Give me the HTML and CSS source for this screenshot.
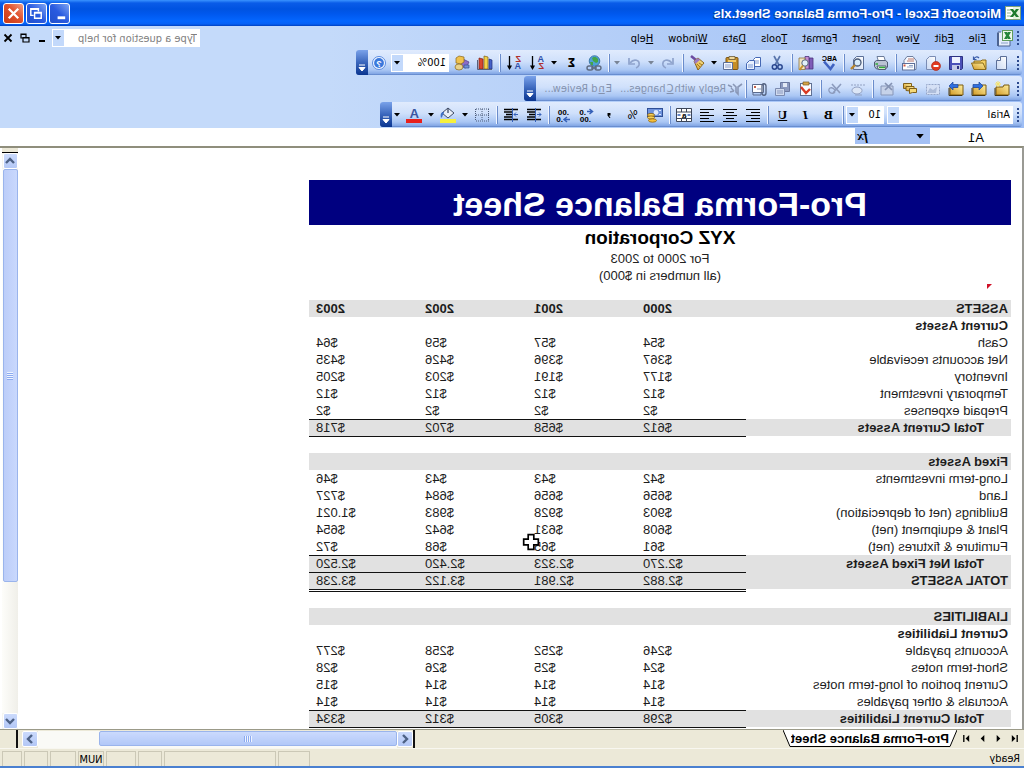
FILE: index.html
```html
<!DOCTYPE html>
<html lang="en">
<head>
<meta charset="utf-8">
<title>Microsoft Excel - Pro-Forma Balance Sheet.xls</title>
<link rel="stylesheet" href="styles.css">
</head>
<body>
<svg class="defs" aria-hidden="true">
  <defs>
    <linearGradient id="gold" x1="0" y1="0" x2="1" y2="1"><stop offset="0" stop-color="#fff0a0"/><stop offset="1" stop-color="#d29a28"/></linearGradient>
    <linearGradient id="page" x1="0" y1="0" x2="1" y2="1"><stop offset="0" stop-color="#fff"/><stop offset="1" stop-color="#c9d8f2"/></linearGradient>
    <symbol id="down" viewBox="0 0 6 4"><path d="M0 0h6L3 3.500z" fill="#000"/></symbol>
    <symbol id="folder" viewBox="0 0 16 16"><path d="M1 4h5l1 2h7v8H1z" fill="url(#gold)" stroke="#7a5a10"/><path d="M2 14.500h13V7" fill="none" stroke="#4a3810"/></symbol>
    <symbol id="chev" viewBox="0 0 10 8"><path d="M1 6l4-4 4 4" fill="none" stroke="#4d6185" stroke-width="2.400"/></symbol>
  </defs>
</svg>
<div class="window">
  <header class="titlebar">
    <svg class="app-icon" viewBox="0 0 16 16"><rect x=".5" y="1.500" width="15" height="13" fill="#e6f3e0" stroke="#7fa27a"/><path d="M8 2h7v12H8z" fill="#fff"/><path d="M10 5h4M10 8h4M10 11h4" stroke="#8fb58a"/><path d="M2 4h3l6 8H8zM8 4h3L5 12H2z" fill="#1f7a2e"/></svg>
    <h1 class="title">Microsoft Excel - Pro-Forma Balance Sheet.xls</h1>
    <div class="caption">
      <button class="cap-btn" aria-label="Minimize"><svg viewBox="0 0 20 20"><path d="M4 13h8v3H4z" fill="#fff"/></svg></button>
      <button class="cap-btn" aria-label="Restore"><svg viewBox="0 0 20 20"><path d="M8 8V5h8v7h-3M8 5.500h8" fill="none" stroke="#fff" stroke-width="1.500"/><path d="M5 9h7v6H5zM5 9.500h7" fill="none" stroke="#fff" stroke-width="1.500"/></svg></button>
      <button class="cap-btn cap-close" aria-label="Close"><svg viewBox="0 0 20 20"><path d="M5 5l10 10M15 5L5 15" stroke="#fff" stroke-width="2.400"/></svg></button>
    </div>
  </header>

  <section class="commands">
    <nav class="menubar">
      <span class="grip"></span>
      <svg class="book" viewBox="0 0 18 18"><path d="M4 6v11h12V3h-3" fill="#e4edfb" stroke="#4c6390"/><path d="M16 4v13" stroke="#4c6390" stroke-width="2"/><rect x="1.500" y="1.500" width="10" height="10" fill="#eef8ea" stroke="#5f9a5c"/><path d="M3 3h3l4 7H7zM7 3h3l-4 7H3z" fill="#26863a"/><path d="M6 14h7" stroke="#8ba0c8"/></svg>
      <button class="menu"><u>F</u>ile</button>
      <button class="menu"><u>E</u>dit</button>
      <button class="menu"><u>V</u>iew</button>
      <button class="menu"><u>I</u>nsert</button>
      <button class="menu">F<u>o</u>rmat</button>
      <button class="menu"><u>T</u>ools</button>
      <button class="menu"><u>D</u>ata</button>
      <button class="menu"><u>W</u>indow</button>
      <button class="menu"><u>H</u>elp</button>
      <div class="combo ask">
        <input class="field" type="text" placeholder="Type a question for help" aria-label="Type a question for help">
        <button class="drop" aria-label="Questions"><svg><use href="#down"/></svg></button>
      </div>
      <div class="doc-controls">
        <button aria-label="Minimize workbook"><svg viewBox="0 0 10 10"><path d="M2 7h6v2H2z"/></svg></button>
        <button aria-label="Restore workbook"><svg viewBox="0 0 10 10"><path d="M4 4V1h5v4H7M4 1.500h5M1 4.500h6V9H1zM1 5h6" fill="none" stroke="#000" stroke-width="1.200"/></svg></button>
        <button aria-label="Close workbook"><svg viewBox="0 0 10 10"><path d="M1.500 1.500l7 7M8.500 1.500l-7 7" stroke="#000" stroke-width="1.800"/></svg></button>
      </div>
    </nav>

    <div class="toolbar">
      <span class="grip"></span>
      <button class="tool" aria-label="New"><svg viewBox="0 0 16 16"><path d="M3.500 1.500h6l4 4v9h-10z" fill="url(#page)" stroke="#5b6f98"/><path d="M9.500 1.500v4h4" fill="#fff" stroke="#5b6f98"/></svg></button>
      <button class="tool" aria-label="Open"><svg viewBox="0 0 16 16"><path d="M1 5h4l1 1h7v8H1z" fill="#f4cf62" stroke="#8a6a1a"/><path d="M4 8h11.500l-2.500 6.500H1z" fill="url(#gold)" stroke="#8a6a1a"/><path d="M8 3c2-2 4-1 5 1M13.500 1.500v3h-3" fill="none" stroke="#3a5ca8" stroke-width="1.200"/></svg></button>
      <button class="tool" aria-label="Save"><svg viewBox="0 0 16 16"><path d="M1.500 1.500h13v13h-12l-1-1z" fill="#4a50b8" stroke="#2d3282"/><path d="M4 2h8v6H4z" fill="#eef2ff"/><path d="M4 10h8v5H4z" fill="#c3c9e6"/><path d="M5 11h2v3H5z" fill="#2d3282"/></svg></button>
      <button class="tool" aria-label="Permission"><svg viewBox="0 0 16 16"><path d="M5.500 1.500h6l3 3v10h-9z" fill="url(#page)" stroke="#7a8cb4"/><circle cx="5" cy="11" r="4.500" fill="#e03a20" stroke="#a42010" stroke-width=".6"/><path d="M2.500 10h5v2h-5z" fill="#fff"/></svg></button>
      <button class="tool" aria-label="E-mail"><svg viewBox="0 0 16 16"><path d="M1.500 6L5 1.500h6l3 4v9h-12z" fill="#f4f7ff" stroke="#70809f"/><path d="M4 4h6M4 6h7" stroke="#c07b6a"/><rect x="3.500" y="8.500" width="12" height="6.500" fill="#fff" stroke="#5c6f99"/><path d="M5 12h6M5 10.500h4" stroke="#92a4c8"/><path d="M12.500 9.500h2v2h-2z" fill="#d45a45"/></svg></button>
      <span class="sep"></span>
      <button class="tool" aria-label="Print"><svg viewBox="0 0 16 16"><path d="M5 1.500h7l-1.500 5h-7z" fill="#fff" stroke="#6b7b99"/><path d="M1.500 7l2-1.500h9l2 1.500v4.500l-2 2.500h-9l-2-2z" fill="#b9c2d2" stroke="#4f5c75"/><path d="M3 11h9l-1.500 3.500h-7z" fill="#f7fbe8" stroke="#4f5c75"/><path d="M4 12.500h6M11 9h2.500" stroke="#2fae3a" stroke-width="1.600"/></svg></button>
      <button class="tool" aria-label="Print Preview"><svg viewBox="0 0 16 16"><path d="M2.500 1.500h7l3 3v10h-10z" fill="url(#page)" stroke="#5b6f98"/><circle cx="8.500" cy="7.500" r="3.500" fill="#d8ecfa" stroke="#4b5b78" stroke-width="1.300"/><path d="M11 10l4 4" stroke="#b8862c" stroke-width="2.400"/></svg></button>
      <span class="sep"></span>
      <button class="tool" aria-label="Spelling"><svg viewBox="0 0 16 16"><text x="0" y="6" class="glyph-abc">ABC</text><path d="M3 9l3.500 5L13 6.500" fill="none" stroke="#3f62c0" stroke-width="2.600"/></svg></button>
      <button class="tool" aria-label="Research"><svg viewBox="0 0 16 16"><path d="M1 3h4v11H1z" fill="#7e5bb8" stroke="#4b347c" stroke-width=".8"/><path d="M5 1.500h4v12.500H5z" fill="#c58cd0" stroke="#4b347c" stroke-width=".8"/><path d="M9 3h6v11.500H9z" fill="#f1e5c0" stroke="#8d7440" stroke-width=".8"/><circle cx="9" cy="8" r="3.200" fill="#e1eff9" stroke="#56657e"/><path d="M11 10.500L14.500 15" stroke="#c8912a" stroke-width="2"/></svg></button>
      <span class="sep"></span>
      <button class="tool" aria-label="Cut"><svg viewBox="0 0 16 16"><path d="M5 1l5 9M11 1L6 10" stroke="#5a76ac" stroke-width="1.700"/><circle cx="5" cy="12" r="2.200" fill="none" stroke="#29468e" stroke-width="1.500"/><circle cx="10.500" cy="12" r="2.200" fill="none" stroke="#29468e" stroke-width="1.500"/></svg></button>
      <button class="tool" aria-label="Copy"><svg viewBox="0 0 16 16"><path d="M1.500 2.500h5l2 2v7h-7z" fill="#fff" stroke="#4568b4"/><path d="M3 6h4M3 8h4" stroke="#7f9bd4"/><path d="M7.500 5.500h5l3 3v6h-8z" fill="#e9f1ff" stroke="#4568b4"/><path d="M9 10h5M9 12h5" stroke="#7f9bd4"/></svg></button>
      <button class="tool" aria-label="Paste"><svg viewBox="0 0 16 16"><rect x="1" y="2.500" width="12" height="12" rx="1" fill="#c68e26" stroke="#7b5513"/><path d="M4 1.500h6v3H4z" fill="#f1d99a" stroke="#6a5a3a" stroke-width=".8"/><path d="M3 5h8v2H3z" fill="#f5cc66"/><path d="M6.500 7.500h9v7h-9z" fill="#f6f8ff" stroke="#5c6f99"/><path d="M8 10h6M8 12h6" stroke="#8a9cc4"/></svg></button>
      <button class="arrow" aria-label="Paste options"><svg><use href="#down"/></svg></button>
      <button class="tool" aria-label="Format Painter"><svg viewBox="0 0 16 16"><path d="M14 1l-5 4" stroke="#6c4aa0" stroke-width="2.600"/><path d="M11 6L7 3 1 8l6 7z" fill="url(#gold)" stroke="#8b6418"/><path d="M11 6L7 3 5 5l5 4z" fill="#9a78c4"/><path d="M8 9l-3 3M6 8l-3 2" stroke="#a87b20"/></svg></button>
      <span class="sep"></span>
      <button class="tool" aria-label="Undo"><svg viewBox="0 0 16 16"><path d="M4 8c4-5 10-3 9 2-.4 1.500-1.500 2.500-3 3" fill="none" stroke="#8fa3cc" stroke-width="1.700"/><path d="M3 3v6h6" fill="none" stroke="#8fa3cc" stroke-width="1.700"/></svg></button>
      <button class="arrow faded" aria-label="Undo list"><svg><use href="#down"/></svg></button>
      <button class="tool" aria-label="Redo"><svg viewBox="0 0 16 16"><path d="M12 8C8 3 2 5 3 10c.4 1.500 1.500 2.500 3 3" fill="none" stroke="#8fa3cc" stroke-width="1.700"/><path d="M13 3v6H7" fill="none" stroke="#8fa3cc" stroke-width="1.700"/></svg></button>
      <button class="arrow faded" aria-label="Redo list"><svg><use href="#down"/></svg></button>
      <span class="sep"></span>
      <button class="tool" aria-label="Insert Hyperlink"><svg viewBox="0 0 16 16"><circle cx="7.500" cy="6" r="5.300" fill="#4fa0d8" stroke="#2e6c9c" stroke-width=".8"/><path d="M4 4c2-3 5-2 6-1l-1 3-3 2-2-1zM9 7l3 0-1 3-2 0z" fill="#43a648"/><rect x="1" y="11" width="6" height="4" rx="2" fill="none" stroke="#5d6a80" stroke-width="1.400"/><rect x="9" y="11" width="6" height="4" rx="2" fill="none" stroke="#5d6a80" stroke-width="1.400"/><path d="M5 13h6" stroke="#5d6a80" stroke-width="1.500"/></svg></button>
      <button class="tool sigma" aria-label="AutoSum">Σ</button>
      <button class="arrow" aria-label="AutoSum options"><svg><use href="#down"/></svg></button>
      <button class="tool" aria-label="Sort Ascending"><svg viewBox="0 0 16 16"><text x="1" y="7" class="glyph-sort blue">A</text><text x="1" y="14" class="glyph-sort red">Z</text><path d="M12.500 1v12" stroke="#000" stroke-width="1.300"/><path d="M10 10.500h5L12.500 15z"/></svg></button>
      <button class="tool" aria-label="Sort Descending"><svg viewBox="0 0 16 16"><text x="1" y="7" class="glyph-sort red">Z</text><text x="1" y="14" class="glyph-sort blue">A</text><path d="M12.500 1v12" stroke="#000" stroke-width="1.300"/><path d="M10 10.500h5L12.500 15z"/></svg></button>
      <span class="sep"></span>
      <button class="tool" aria-label="Chart Wizard"><svg viewBox="0 0 16 16"><path d="M1 5l3-1v10H1z" fill="#4460c8" stroke="#1f2f7a" stroke-width=".7"/><path d="M5 2l4-1v13H5z" fill="#f2d24a" stroke="#7b5b12" stroke-width=".7"/><path d="M10 4l4-1v11h-4z" fill="#d8452e" stroke="#7a1e12" stroke-width=".7"/><path d="M1 14.500h14.500V5" fill="none" stroke="#56617c"/></svg></button>
      <button class="tool" aria-label="Drawing"><svg viewBox="0 0 16 16"><path d="M1 7l6-3 3 7-6 2z" fill="#8a6cc8" stroke="#4d3a86" stroke-width=".7"/><path d="M6 2l5-1 3 2v5l-5 1-3-2z" fill="#f0c24e" stroke="#8a6518" stroke-width=".7"/><ellipse cx="11" cy="12" rx="4" ry="3" fill="#e8d28c" stroke="#8a6518" stroke-width=".7"/><path d="M1 10h5v3H1z" fill="#6f8fd8" stroke="#33508f" stroke-width=".7"/></svg></button>
      <div class="combo zoom">
        <input class="field" type="text" value="100%" aria-label="Zoom">
        <button class="drop" aria-label="Zoom levels"><svg><use href="#down"/></svg></button>
      </div>
      <button class="tool" aria-label="Help"><svg viewBox="0 0 16 16"><circle cx="8" cy="8" r="6.500" fill="#f5f9ff" stroke="#5a8ae0"/><circle cx="8" cy="8" r="4.900" fill="#3b78dc"/><text x="5.200" y="11.500" class="glyph-help">?</text></svg></button>
      <button class="more" aria-label="Toolbar options"><svg viewBox="0 0 8 8"><path d="M1 1h6M1 3.500h6L4 7z" fill="#fff" stroke="#fff" stroke-width="1"/></svg></button>
    </div>

    <div class="toolbar">
      <span class="grip"></span>
      <button class="tool" aria-label="New Comment"><svg viewBox="0 0 16 16"><use href="#folder"/><path d="M12 0v6M9 3h6M10 1l4 4M14 1l-4 4" stroke="#f6e36a"/></svg></button>
      <button class="tool" aria-label="Previous Comment"><svg viewBox="0 0 16 16"><use href="#folder"/><path d="M4 5l4-4v2.500h6v3H8V9z" fill="#2f6fe0" stroke="#1c4596" stroke-width=".7"/></svg></button>
      <button class="tool" aria-label="Next Comment"><svg viewBox="0 0 16 16"><use href="#folder"/><path d="M15 5l-4-4v2.500H6v3h5V9z" fill="#2f6fe0" stroke="#1c4596" stroke-width=".7"/></svg></button>
      <button class="tool" aria-label="Show Comment"><svg viewBox="0 0 16 16"><rect x="1.500" y="3.500" width="13" height="10" fill="#d5e0f5" stroke="#96a6c8" stroke-dasharray="2 1"/><path d="M4 6l4 3 3-2 3 5H5z" fill="#aebdda"/></svg></button>
      <button class="tool" aria-label="Show All Comments"><svg viewBox="0 0 16 16"><path d="M6.500 2.500h8v5h-8z" fill="url(#gold)" stroke="#80601a"/><path d="M4 5.500h8v4l-8 1z" fill="url(#gold)" stroke="#80601a"/><path d="M1.500 7.500h7v5l-3-1h-4z" fill="#f6d978" stroke="#80601a"/></svg></button>
      <button class="tool" aria-label="Delete Comment"><svg viewBox="0 0 16 16"><path d="M2 5h12v9H2z" fill="#c6d2e9" stroke="#8796b8"/><path d="M3 2l7 7M10 2L3 9" stroke="#8492b2" stroke-width="1.700"/></svg></button>
      <span class="sep"></span>
      <button class="tool" aria-label="Create Ink"><svg viewBox="0 0 16 16"><path d="M1 4h14" stroke="#92a1c2" stroke-dasharray="2 1"/><ellipse cx="9" cy="9.500" rx="5" ry="3.500" fill="#dce6f6" stroke="#92a1c2"/><path d="M4 14h7" stroke="#92a1c2"/></svg></button>
      <button class="tool" aria-label="Delete Ink"><svg viewBox="0 0 16 16"><path d="M2 3l8 9M11 3l-8 9" stroke="#8c9bbd" stroke-width="1.600"/><path d="M8 9c3-4 7-2 6 1s-5 3-6 1" fill="none" stroke="#8c9bbd" stroke-width="1.300"/></svg></button>
      <span class="sep"></span>
      <button class="tool" aria-label="Create Task"><svg viewBox="0 0 16 16"><rect x="2.500" y="2.500" width="11" height="12" fill="#fbfcff" stroke="#5f6f92"/><path d="M5 1h6v3H5z" fill="#d8a648" stroke="#76581f" stroke-width=".7"/><path d="M4 8l4 4 5-6" fill="none" stroke="#d83a24" stroke-width="2.400"/></svg></button>
      <button class="tool" aria-label="Update File"><svg viewBox="0 0 16 16"><path d="M1.500 1.500h9v9h-9z" fill="#8c9ac0" stroke="#6a78a0"/><path d="M4 2h4v4H4z" fill="#e4eaf6"/><path d="M6.500 7.500h9v7h-9z" fill="#d0daee" stroke="#7c8bb0"/><path d="M8 10h6M8 12h6" stroke="#8c9ac0"/></svg></button>
      <button class="tool" aria-label="Send to Mail Recipient"><svg viewBox="0 0 16 16"><path d="M4.500 3.500h11v8h-11z" fill="#fff" stroke="#5c6b8c"/><path d="M7 8h4" stroke="#8a9cc4"/><path d="M12 5h2v2h-2z" fill="#c4624d"/><path d="M2 5v7c0 3 4 3 4 0V5c0-3-4-3-4 0" fill="none" stroke="#53617f" stroke-width="1.300"/><path d="M7 12v2h8v-2" fill="none" stroke="#5c6b8c"/></svg></button>
      <span class="sep"></span>
      <button class="text-tool"><svg viewBox="0 0 16 16"><path d="M1 3l4 3v7l2-2V6l3-3" fill="none" stroke="#8997b6" stroke-width="1.600"/><path d="M9 10l3-3M9 10l4 1M11 6l4-2" stroke="#8997b6" stroke-width="1.400"/></svg>Reply with <u>C</u>hanges...</button>
      <button class="text-tool">E<u>n</u>d Review...</button>
      <button class="more" aria-label="Toolbar options"><svg viewBox="0 0 8 8"><path d="M1 1h6M1 3.500h6L4 7z" fill="#fff" stroke="#fff" stroke-width="1"/></svg></button>
    </div>

    <div class="toolbar">
      <span class="grip"></span>
      <div class="combo font-name">
        <input class="field" type="text" value="Arial" aria-label="Font">
        <button class="drop" aria-label="Fonts"><svg><use href="#down"/></svg></button>
      </div>
      <div class="combo font-size">
        <input class="field" type="text" value="10" aria-label="Font size">
        <button class="drop" aria-label="Font sizes"><svg><use href="#down"/></svg></button>
      </div>
      <span class="sep"></span>
      <button class="tool serif" aria-label="Bold">B</button>
      <button class="tool serif" aria-label="Italic"><i>I</i></button>
      <button class="tool serif" aria-label="Underline"><u>U</u></button>
      <span class="sep"></span>
      <button class="tool" aria-label="Align Left"><svg viewBox="0 0 16 16"><path d="M1 2.500h14M1 5.500h9M1 8.500h14M1 11.500h9M1 14.500h14" stroke="#000"/></svg></button>
      <button class="tool" aria-label="Center"><svg viewBox="0 0 16 16"><path d="M1 2.500h14M4 5.500h8M1 8.500h14M4 11.500h8M1 14.500h14" stroke="#000"/></svg></button>
      <button class="tool" aria-label="Align Right"><svg viewBox="0 0 16 16"><path d="M1 2.500h14M6 5.500h9M1 8.500h14M6 11.500h9M1 14.500h14" stroke="#000"/></svg></button>
      <button class="tool" aria-label="Merge and Center"><svg viewBox="0 0 16 16"><path d="M.5 1.500h15v13H.5zM.5 5h15M.5 11.500h15M5.500 1.500V5M10.500 1.500V5M5.500 11.500v3M10.500 11.500v3" fill="#fff" stroke="#3d4658"/><text x="5.500" y="10.800" class="glyph-tiny">a</text><path d="M1.500 8h3M11.500 8h3" stroke="#3560b8" stroke-width="1.500"/></svg></button>
      <span class="sep"></span>
      <button class="tool" aria-label="Currency Style"><svg viewBox="0 0 16 16"><rect x=".5" y="1.500" width="15" height="8" fill="#6f93dc" stroke="#2f4f96"/><circle cx="7" cy="5.500" r="2.400" fill="#dce8ff"/><path d="M2 3.500h2M2 7.500h2" stroke="#dce8ff"/><ellipse cx="12" cy="8" rx="3.500" ry="1.600" fill="#f7d25a" stroke="#8b5f0e" stroke-width=".8"/><ellipse cx="12" cy="10.500" rx="3.500" ry="1.600" fill="#f7d25a" stroke="#8b5f0e" stroke-width=".8"/><ellipse cx="10.500" cy="13.500" rx="4" ry="1.700" fill="#f7c03a" stroke="#8b5f0e" stroke-width=".8"/></svg></button>
      <button class="tool plain" aria-label="Percent Style">%</button>
      <button class="tool" aria-label="Comma Style"><svg viewBox="0 0 16 16"><path d="M6.500 6h3v2.500L7.500 11h-1L8 8.500H6.500z"/></svg></button>
      <button class="tool" aria-label="Increase Decimal"><svg viewBox="0 0 16 16"><text x="8" y="7.500" class="glyph-dec">.0</text><text x="3" y="15" class="glyph-dec">.00</text><path d="M7 4.500H2M4.500 2L1.500 4.500 4.500 7" fill="none" stroke="#3560b8" stroke-width="1.500"/></svg></button>
      <button class="tool" aria-label="Decrease Decimal"><svg viewBox="0 0 16 16"><text x="2" y="7.500" class="glyph-dec">.00</text><text x="8" y="15" class="glyph-dec">.0</text><path d="M1 12.500h5M4 10l3 2.500L4 15" fill="none" stroke="#3560b8" stroke-width="1.500"/></svg></button>
      <span class="sep"></span>
      <button class="tool" aria-label="Decrease Indent"><svg viewBox="0 0 16 16"><path d="M1 2.500h14M7 5h8M7 7.500h6M7 10h8M1 12.500h14" stroke="#000" stroke-width="1.300"/><path d="M5 7.500H1M3 5.500l-2 2 2 2M6.500 1v14" fill="none" stroke="#3560b8"/></svg></button>
      <button class="tool" aria-label="Increase Indent"><svg viewBox="0 0 16 16"><path d="M1 2.500h14M7 5h8M7 7.500h6M7 10h8M1 12.500h14" stroke="#000" stroke-width="1.300"/><path d="M1 7.500h4M3 5.500l2 2-2 2M6.500 1v14" fill="none" stroke="#3560b8"/></svg></button>
      <span class="sep"></span>
      <button class="tool" aria-label="Borders"><svg viewBox="0 0 16 16"><path d="M1.500 2v12M8 2v12M14.500 2v12M1 2h14M1 8h14M1 14h14" stroke="#4b5a78" stroke-dasharray="1 1"/></svg></button>
      <button class="arrow" aria-label="Border options"><svg><use href="#down"/></svg></button>
      <button class="tool wide" aria-label="Fill Color"><svg viewBox="0 0 18 16"><path d="M3 6l6-5 6 5-6 5z" fill="#e8eef8" stroke="#3f4c66"/><path d="M9 1V6" stroke="#3f4c66" stroke-width="1.300"/><path d="M13 5c3 0 4 2 3 6-2-1-1-3-3-5z" fill="#3f70c4"/><path d="M1 12h16v4H1z" fill="#f6f03c"/></svg></button>
      <button class="arrow" aria-label="Fill colors"><svg><use href="#down"/></svg></button>
      <button class="tool wide" aria-label="Font Color"><svg viewBox="0 0 18 16"><text x="4" y="11" class="glyph-font">A</text><path d="M1 12h16v4H1z" fill="#e8201c"/></svg></button>
      <button class="arrow" aria-label="Font colors"><svg><use href="#down"/></svg></button>
      <button class="more" aria-label="Toolbar options"><svg viewBox="0 0 8 8"><path d="M1 1h6M1 3.500h6L4 7z" fill="#fff" stroke="#fff" stroke-width="1"/></svg></button>
    </div>
  </section>

  <div class="formula">
    <input class="name-box" type="text" value="A1" aria-label="Name box">
    <div class="formula-tools">
      <button aria-label="Names"><svg class="name-arrow"><use href="#down"/></svg></button>
      <button class="fx" aria-label="Insert Function">fx</button>
    </div>
    <input class="formula-input" type="text" aria-label="Formula">
  </div>

  <main class="workspace">
    <div class="sheet">
      <h2 class="banner">Pro-Forma Balance Sheet</h2>
      <p class="company">XYZ Corporation</p>
      <p class="note">For 2000 to 2003</p>
      <p class="note">(all numbers in $000)</p>
      <div class="gap"><span class="comment-mark"></span></div>
      <table class="grid">
        <colgroup><col class="c-label"><col class="c-first"><col class="c-num"><col class="c-num"><col class="c-num"></colgroup>
        <tbody>
          <tr class="shade head"><th>ASSETS</th><td>2000</td><td>2001</td><td>2002</td><td>2003</td></tr>
          <tr><th class="strong">Current Assets</th><td></td><td></td><td></td><td></td></tr>
          <tr><th>Cash</th><td>$54</td><td>$57</td><td>$59</td><td>$64</td></tr>
          <tr><th>Net accounts receivable</th><td>$367</td><td>$396</td><td>$426</td><td>$435</td></tr>
          <tr><th>Inventory</th><td>$177</td><td>$191</td><td>$203</td><td>$205</td></tr>
          <tr><th>Temporary investment</th><td>$12</td><td>$12</td><td>$12</td><td>$12</td></tr>
          <tr><th>Prepaid expenses</th><td>$2</td><td>$2</td><td>$2</td><td>$2</td></tr>
          <tr class="shade ruled"><th class="strong indent">Total Current Assets</th><td>$612</td><td>$658</td><td>$702</td><td>$718</td></tr>
          <tr class="after"><th></th><td></td><td></td><td></td><td></td></tr>
          <tr class="shade"><th class="strong">Fixed Assets</th><td></td><td></td><td></td><td></td></tr>
          <tr><th>Long-term investments</th><td>$42</td><td>$43</td><td>$43</td><td>$46</td></tr>
          <tr><th>Land</th><td>$656</td><td>$656</td><td>$684</td><td>$727</td></tr>
          <tr><th>Buildings (net of depreciation)</th><td>$903</td><td>$928</td><td>$983</td><td>$1.021</td></tr>
          <tr><th>Plant &amp; equipment (net)</th><td>$608</td><td>$631</td><td>$642</td><td>$654</td></tr>
          <tr><th>Furniture &amp; fixtures (net)</th><td>$61</td><td class="pointed">$65<svg class="cursor" viewBox="0 0 16 16"><path d="M5.500 1.500h5v4h4v5h-4v4h-5v-4h-4v-5h4z" fill="#fff" stroke="#000" stroke-width="1.500"/></svg></td><td>$68</td><td>$72</td></tr>
          <tr class="shade ruled"><th class="strong indent">Total Net Fixed Assets</th><td>$2.270</td><td>$2.323</td><td>$2.420</td><td>$2.520</td></tr>
          <tr class="shade ruled"><th class="strong">TOTAL ASSETS</th><td>$2.882</td><td>$2.981</td><td>$3.122</td><td>$3.238</td></tr>
          <tr class="after double"><th></th><td></td><td></td><td></td><td></td></tr>
          <tr class="shade"><th class="strong">LIABILITIES</th><td></td><td></td><td></td><td></td></tr>
          <tr><th class="strong">Current Liabilities</th><td></td><td></td><td></td><td></td></tr>
          <tr><th>Accounts payable</th><td>$246</td><td>$252</td><td>$258</td><td>$277</td></tr>
          <tr><th>Short-term notes</th><td>$24</td><td>$25</td><td>$26</td><td>$28</td></tr>
          <tr><th>Current portion of long-term notes</th><td>$14</td><td>$14</td><td>$14</td><td>$15</td></tr>
          <tr><th>Accruals &amp; other payables</th><td>$14</td><td>$14</td><td>$14</td><td>$14</td></tr>
          <tr class="shade ruled"><th class="strong indent">Total Current Liabilities</th><td>$298</td><td>$305</td><td>$312</td><td>$334</td></tr>
          <tr class="after"><th></th><td></td><td></td><td></td><td></td></tr>
        </tbody>
      </table>
    </div>
    <div class="vscroll">
      <div class="split-handle"></div>
      <button class="sb" aria-label="Scroll up"><svg><use href="#chev"/></svg></button>
      <div class="vtrack"><div class="vthumb"><span></span></div></div>
      <button class="sb flip" aria-label="Scroll down"><svg><use href="#chev"/></svg></button>
    </div>
  </main>

  <div class="bottom">
    <div class="tabs">
      <button class="nav" aria-label="First sheet"><svg viewBox="0 0 10 10"><path d="M2 1v8" stroke="#000" stroke-width="1.500"/><path d="M8 1v8L4 5z"/></svg></button>
      <button class="nav" aria-label="Previous sheet"><svg viewBox="0 0 10 10"><path d="M7 1v8L3 5z"/></svg></button>
      <button class="nav" aria-label="Next sheet"><svg viewBox="0 0 10 10"><path d="M3 1v8l4-4z"/></svg></button>
      <button class="nav" aria-label="Last sheet"><svg viewBox="0 0 10 10"><path d="M8 1v8" stroke="#000" stroke-width="1.500"/><path d="M2 1v8l4-4z"/></svg></button>
      <button class="tab"><svg class="edge" viewBox="0 0 8 17" preserveAspectRatio="none"><path d="M0 0l7 17h1V0z" fill="#fff"/><path d="M0 0l7 16.500h1" fill="none" stroke="#000"/></svg><span>Pro-Forma Balance Sheet</span><svg class="edge" viewBox="0 0 8 17" preserveAspectRatio="none"><path d="M8 0L1 17H0V0z" fill="#fff"/><path d="M8 0L1 16.500H0" fill="none" stroke="#000"/></svg></button>
    </div>
    <div class="hscroll">
      <button class="sb left" aria-label="Scroll left"><svg><use href="#chev"/></svg></button>
      <div class="htrack"><div class="hthumb"><span></span></div></div>
      <button class="sb right" aria-label="Scroll right"><svg><use href="#chev"/></svg></button>
    </div>
    <div class="corner"></div>
  </div>

  <footer class="status">
    <span class="ready">Ready</span>
    <span class="cell w34"></span>
    <span class="cell w112"></span>
    <span class="cell w25"></span>
    <span class="cell w30"></span>
    <span class="cell w28">NUM</span>
    <span class="cell w28"></span>
    <span class="cell w25"></span>
    <span class="cell w20"></span>
  </footer>
</div>
</body>
</html>
```
FILE: styles.css
```css
* { box-sizing: border-box; }

body {
  margin: 0;
  overflow: hidden;
  font-family: "DejaVu Sans Condensed", "DejaVu Sans", sans-serif;
  font-size: 11px;
  color: #000;
}

button, input {
  font: inherit;
  color: inherit;
  margin: 0;
  padding: 0;
  border: 0;
  border-radius: 0;
  background: none;
}

button { display: flex; align-items: center; justify-content: center; }
h1, h2, p { margin: 0; }
.defs { position: absolute; width: 0; height: 0; }

/* the whole window is shown as in a mirror */
.window {
  display: flex;
  flex-direction: column;
  height: 100vh;
  transform: scaleX(-1);
  background: #ece9d8;
  border-bottom: 2px solid #4a80d0;
}

/* title bar */
.titlebar {
  display: flex;
  align-items: center;
  gap: 4px;
  height: 26px;
  flex: none;
  padding: 0 3px;
  background: linear-gradient(#3a93ff 0, #0a5ce8 3px, #0053e1 9px, #0058ee 14px, #0466ff 21px, #0560f5 24px, #0040c0 26px);
}
.app-icon { width: 16px; height: 16px; }
.title {
  flex: 1;
  font-family: "Liberation Sans", sans-serif;
  font-size: 13px;
  font-weight: bold;
  color: #fff;
  text-shadow: 1px 1px #0a3a9a;
}
.caption { display: flex; gap: 2px; }
.cap-btn {
  width: 21px;
  height: 21px;
  border: 1px solid #fff;
  border-radius: 3px;
  background: linear-gradient(135deg, #7ea4f2, #2a5be0 50%, #2250cc);
}
.cap-btn svg { width: 19px; height: 19px; }
.cap-close { background: linear-gradient(135deg, #f0a088, #e0502c 45%, #c83a14); }

/* menus and toolbars */
.commands {
  flex: none;
  padding: 0 2px;
  background: linear-gradient(90deg, #9ebef5, #c4dafa 68%);
}
.menubar { display: flex; align-items: center; height: 24px; }
.grip {
  flex: none;
  width: 2px;
  height: 14px;
  margin: 0 3px;
  background: repeating-linear-gradient(#2c4a8e 0, #2c4a8e 2px, transparent 2px, transparent 4px);
}
.book { width: 18px; height: 18px; margin-right: 2px; }
.menu { padding: 0 7px 0 8px; }
.combo {
  display: flex;
  height: 18px;
  background: #fff;
}
.field { flex: 1; min-width: 0; padding: 0 3px; }
.field::placeholder { color: #808080; opacity: 1; }
.drop {
  width: 11px;
  margin: 1px;
  background: #c3d9fb;
}
.drop svg, .arrow svg { width: 6px; height: 4px; }
.ask { width: 148px; margin-left: auto; }
.doc-controls { display: flex; gap: 5px; margin-left: 4px; }
.doc-controls button { width: 12px; height: 14px; }
.doc-controls svg { width: 10px; height: 10px; }

.toolbar {
  display: flex;
  align-items: center;
  width: max-content;
  height: 25px;
  margin-bottom: 1px;
  border-radius: 3px;
  overflow: hidden;
  background: linear-gradient(#e0ebfd, #cfe0fb 45%, #a9c6f4 80%, #86a9e6 94%, #5a80c4);
}
.tool { flex: none; width: 23px; height: 22px; }
.tool svg { width: 16px; height: 16px; overflow: visible; }
.arrow { flex: none; width: 11px; height: 22px; }
.faded { opacity: 0.4; }
.sep {
  flex: none;
  width: 6px;
  height: 18px;
  background: linear-gradient(90deg, transparent 2px, #6a8ccb 2px, #6a8ccb 3px, #f1f6ff 3px, #f1f6ff 4px, transparent 4px);
}
.zoom { width: 58px; margin-left: 2px; }
.font-name { width: 126px; margin-left: 1px; }
.font-size { width: 38px; margin-left: 3px; }
.wide svg { width: 18px; height: 16px; }
.more {
  width: 12px;
  height: 25px;
  align-items: flex-end;
  padding-bottom: 3px;
  background: linear-gradient(#7aa2ea, #3a66bc 50%, #0a3590);
}
.more svg { width: 8px; height: 8px; }
.text-tool { gap: 1px; padding-right: 8px; color: #8492ae; white-space: nowrap; }
.text-tool svg { width: 16px; height: 16px; }
.serif { font-family: "Liberation Serif", serif; font-size: 13px; font-weight: bold; }
.plain { font-size: 12px; }
.sigma { font-size: 13px; font-weight: bold; }
.glyph-abc { font: bold 7px "Liberation Sans", sans-serif; }
.glyph-sort { font: bold 9px "Liberation Sans", sans-serif; }
.glyph-dec { font: bold 8px "Liberation Sans", sans-serif; }
.glyph-tiny { font: bold 8px "Liberation Sans", sans-serif; }
.glyph-help { font: bold 9px "Liberation Sans", sans-serif; fill: #fff; }
.glyph-font { font: bold 13px "Liberation Sans", sans-serif; fill: #3a55a0; }
.blue { fill: #2f4fa8; }
.red { fill: #b0302c; }

/* formula bar */
.formula {
  display: flex;
  flex: none;
  height: 18px;
  background: #fff;
}
.name-box {
  width: 94px;
  padding-left: 2px;
  text-align: center;
  font-family: "Liberation Sans", sans-serif;
  font-size: 13px;
}
.formula-tools {
  display: flex;
  justify-content: space-between;
  width: 75px;
  height: 16px;
  padding: 0 2px 0 6px;
  background: #a3c0f4;
}
.name-arrow { width: 8px; height: 5px; }
.fx { font-family: "Liberation Serif", serif; font-size: 13px; font-weight: bold; font-style: italic; }
.formula-input { flex: 1; }

/* sheet */
.workspace {
  display: flex;
  flex: 1;
  min-height: 0;
  border-top: 2px solid #8f8e7c;
  border-left: 2px solid #9a9a94;
  background: #fff;
}
.sheet {
  flex: 1;
  overflow: hidden;
  padding: 32px 0 0 11px;
  font-family: "Liberation Sans", sans-serif;
  font-size: 13px;
}
.banner {
  width: 702px;
  height: 45px;
  line-height: 48px;
  font-size: 34px;
  text-align: center;
  color: #fff;
  background: #000080;
}
.company {
  width: 702px;
  line-height: 25px;
  font-size: 19px;
  font-weight: bold;
  text-align: center;
}
.note { width: 702px; line-height: 17px; text-align: center; color: #222; }
.gap { position: relative; height: 16px; }
.comment-mark {
  position: absolute;
  left: 19px;
  top: 0;
  width: 5px;
  height: 5px;
  background: #d01028;
  clip-path: polygon(0 0, 100% 0, 100% 100%);
}
.grid { width: 702px; table-layout: fixed; border-collapse: separate; border-spacing: 0; }
.c-label { width: 265px; }
.c-first { width: 110px; }
.c-num { width: 109px; }
.grid th, .grid td { height: 17px; padding: 0; line-height: 17px; white-space: nowrap; color: #1c1c1c; }
.grid th { padding-left: 3px; text-align: left; font-weight: normal; }
.grid td { padding-right: 7px; text-align: right; }
.grid .strong, .grid .head th, .grid .head td { font-weight: bold; }
.grid .indent { padding-left: 27px; }
.shade { background: #e1e1e1; }
.ruled td, .after td { background-image: linear-gradient(#111, #111); background-size: 100% 1px; background-repeat: no-repeat; }
.grid .double th { height: 19px; }
.double td { background-image: linear-gradient(#111 1px, #fff 1px, #fff 2px, #111 2px); background-size: 100% 3px; }
.pointed { position: relative; }
.cursor { position: absolute; right: -5px; top: -5px; width: 18px; height: 18px; }

/* scroll bars */
.vscroll {
  display: flex;
  flex-direction: column;
  width: 16px;
  margin-right: 2px;
  background: #f6f5f0;
}
.split-handle { height: 5px; background: #ece9d8; border-bottom: 1px solid #000; }
.sb {
  flex: none;
  width: 15px;
  height: 16px;
  border: 1px solid #fff;
  border-radius: 2px;
  background: linear-gradient(#cbdafc, #b4c8f6);
}
.sb svg { width: 10px; height: 8px; }
.flip svg { transform: rotate(180deg); }
.left svg { transform: rotate(-90deg); }
.right svg { transform: rotate(90deg); }
.vtrack { flex: 1; background: linear-gradient(90deg, #f0efe9, #fdfdfa); }
.vthumb, .hthumb {
  display: flex;
  align-items: center;
  justify-content: center;
  border: 1px solid #9ab4ec;
  border-radius: 2px;
}
.vthumb { width: 15px; height: 76%; background: linear-gradient(90deg, #c9d8fd, #bccdf9); }
.vthumb span { width: 6px; height: 8px; background: repeating-linear-gradient(#eef4ff 0, #eef4ff 1px, #8caaf0 1px, #8caaf0 2px); }

.bottom { display: flex; flex: none; height: 19px; border-top: 1px solid #9b9a88; }
.tabs { display: flex; flex: 1; min-width: 0; padding-left: 1px; }
.nav { width: 16px; height: 17px; }
.nav svg { width: 9px; height: 9px; }
.tab { height: 17px; margin-left: 2px; font-family: "Liberation Sans", sans-serif; font-size: 13px; font-weight: bold; }
.tab span { height: 17px; line-height: 17px; background: #fff; border-bottom: 1px solid #000; }
.edge { width: 8px; height: 17px; }
.hscroll {
  display: flex;
  width: 39%;
  border-left: 2px solid #111;
  border-right: 2px solid #111;
  padding: 1px 4px 0 0;
}
.hscroll .sb { width: 16px; }
.htrack { flex: 1; background: #fafaf6; }
.hthumb { width: 83%; height: 15px; background: linear-gradient(#cbdafd, #b2c8f8); }
.hthumb span { width: 8px; height: 6px; background: repeating-linear-gradient(90deg, #eef4ff 0, #eef4ff 1px, #8caaf0 1px, #8caaf0 2px); }
.corner { width: 16px; }

/* status bar */
.status {
  display: flex;
  flex: none;
  gap: 2px;
  height: 18px;
  padding: 2px 2px 0;
  border-top: 1px solid #f8f7f0;
  line-height: 15px;
}
.ready { flex: 1; padding-left: 2px; }
.cell { border: 1px solid #cbc8b6; border-bottom: 0; text-align: center; }
.w20 { width: 20px; }
.w25 { width: 24px; }
.w28 { width: 26px; }
.w30 { width: 30px; }
.w34 { width: 32px; }
.w112 { width: 112px; }
```
